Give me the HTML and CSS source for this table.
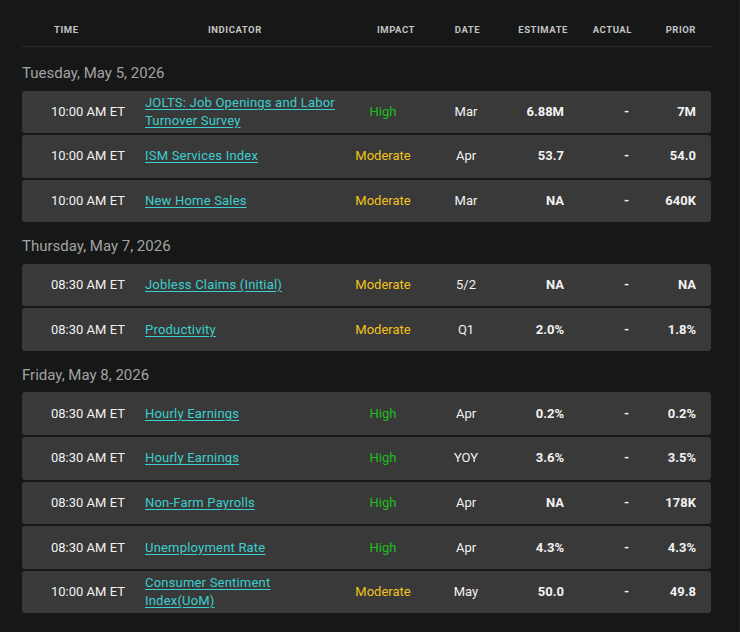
FILE: index.html
```html
<!DOCTYPE html>
<html>
<head>
<meta charset="utf-8">
<link rel="stylesheet" href="styles.css">
</head>
<body>
<div class="page">
  <div class="head grid">
    <div class="h h-time">Time</div>
    <div class="h h-ind">Indicator</div>
    <div class="h h-imp">Impact</div>
    <div class="h h-date">Date</div>
    <div class="h h-est">Estimate</div>
    <div class="h h-act">Actual</div>
    <div class="h h-prior">Prior</div>
  </div>

  <section class="day">
    <h2 class="day-title">Tuesday, May 5, 2026</h2>
    <div class="rows">
      <div class="row grid">
        <div class="c-time">10:00 AM ET</div>
        <div class="c-ind"><a href="#">JOLTS: Job Openings and Labor Turnover Survey</a></div>
        <div class="c-imp high">High</div>
        <div class="c-date">Mar</div>
        <div class="c-est">6.88M</div>
        <div class="c-act">-</div>
        <div class="c-prior">7M</div>
      </div>
      <div class="row grid">
        <div class="c-time">10:00 AM ET</div>
        <div class="c-ind"><a href="#">ISM Services Index</a></div>
        <div class="c-imp mod">Moderate</div>
        <div class="c-date">Apr</div>
        <div class="c-est">53.7</div>
        <div class="c-act">-</div>
        <div class="c-prior">54.0</div>
      </div>
      <div class="row grid">
        <div class="c-time">10:00 AM ET</div>
        <div class="c-ind"><a href="#">New Home Sales</a></div>
        <div class="c-imp mod">Moderate</div>
        <div class="c-date">Mar</div>
        <div class="c-est">NA</div>
        <div class="c-act">-</div>
        <div class="c-prior">640K</div>
      </div>
    </div>
  </section>

  <section class="day">
    <h2 class="day-title">Thursday, May 7, 2026</h2>
    <div class="rows">
      <div class="row grid">
        <div class="c-time">08:30 AM ET</div>
        <div class="c-ind"><a href="#">Jobless Claims (Initial)</a></div>
        <div class="c-imp mod">Moderate</div>
        <div class="c-date">5/2</div>
        <div class="c-est">NA</div>
        <div class="c-act">-</div>
        <div class="c-prior">NA</div>
      </div>
      <div class="row grid">
        <div class="c-time">08:30 AM ET</div>
        <div class="c-ind"><a href="#">Productivity</a></div>
        <div class="c-imp mod">Moderate</div>
        <div class="c-date">Q1</div>
        <div class="c-est">2.0%</div>
        <div class="c-act">-</div>
        <div class="c-prior">1.8%</div>
      </div>
    </div>
  </section>

  <section class="day">
    <h2 class="day-title">Friday, May 8, 2026</h2>
    <div class="rows">
      <div class="row grid">
        <div class="c-time">08:30 AM ET</div>
        <div class="c-ind"><a href="#">Hourly Earnings</a></div>
        <div class="c-imp high">High</div>
        <div class="c-date">Apr</div>
        <div class="c-est">0.2%</div>
        <div class="c-act">-</div>
        <div class="c-prior">0.2%</div>
      </div>
      <div class="row grid">
        <div class="c-time">08:30 AM ET</div>
        <div class="c-ind"><a href="#">Hourly Earnings</a></div>
        <div class="c-imp high">High</div>
        <div class="c-date">YOY</div>
        <div class="c-est">3.6%</div>
        <div class="c-act">-</div>
        <div class="c-prior">3.5%</div>
      </div>
      <div class="row grid">
        <div class="c-time">08:30 AM ET</div>
        <div class="c-ind"><a href="#">Non-Farm Payrolls</a></div>
        <div class="c-imp high">High</div>
        <div class="c-date">Apr</div>
        <div class="c-est">NA</div>
        <div class="c-act">-</div>
        <div class="c-prior">178K</div>
      </div>
      <div class="row grid">
        <div class="c-time">08:30 AM ET</div>
        <div class="c-ind"><a href="#">Unemployment Rate</a></div>
        <div class="c-imp high">High</div>
        <div class="c-date">Apr</div>
        <div class="c-est">4.3%</div>
        <div class="c-act">-</div>
        <div class="c-prior">4.3%</div>
      </div>
      <div class="row grid">
        <div class="c-time">10:00 AM ET</div>
        <div class="c-ind"><a href="#">Consumer Sentiment Index(UoM)</a></div>
        <div class="c-imp mod">Moderate</div>
        <div class="c-date">May</div>
        <div class="c-est">50.0</div>
        <div class="c-act">-</div>
        <div class="c-prior">49.8</div>
      </div>
    </div>
  </section>
</div>
</body>
</html>
```

FILE: styles.css
```css
html, body {
  margin: 0;
  padding: 0;
  background: #161717;
}
body {
  font-family: Roboto, "Liberation Sans", sans-serif;
  color: #f2f2f2;
  height: 632px;
  overflow: hidden;
  border-right: 1px solid #1f2020;
  box-sizing: border-box;
}
.page {
  padding: 0 28px 0 22px;
}
.grid {
  display: grid;
  grid-template-columns: 113px 207px 82px 84px 70px 65px 69px;
  align-items: center;
}
.head {
  height: 46px;
  border-bottom: 1px solid #2a2b2b;
  margin-bottom: 2px;
}
.h {
  font-size: 9.5px;
  font-weight: 700;
  letter-spacing: 0.55px;
  text-transform: uppercase;
  color: #c4c4c4;
  padding-top: 12px;
}
.h-time { padding-left: 32px; }
.h-ind { padding-left: 73px; }
.h-imp { padding-left: 35px; }
.h-date { text-align: center; padding-left: 3px; }
.h-est { text-align: right; padding-right: 10px; }
.h-act { text-align: right; padding-right: 11px; }
.h-prior { text-align: right; padding-right: 16px; }

.day-title {
  margin: 0;
  font-size: 15px;
  font-weight: 400;
  line-height: 18px;
  color: #a3a3a3;
  padding: 15px 0 8.5px;
}
.rows {
  display: flex;
  flex-direction: column;
  gap: 2px;
}
.row {
  height: 42.6px;
  background: #393939;
  border-radius: 3px;
  font-size: 13px;
  line-height: 18px;
}
.c-time { padding-left: 29px; color: #f2f2f2; }
.c-ind { padding-left: 10px; padding-right: 4px; }
.c-ind a {
  color: #3ccfcf;
  letter-spacing: 0.2px;
  text-decoration: underline;
  text-underline-offset: 2px;
}
.c-imp { text-align: center; }
.high { color: #1ebf1e; }
.mod { color: #f2c21b; }
.c-date { text-align: center; font-weight: 400; }
.c-est { text-align: right; padding-right: 14px; font-weight: 700; }
.c-act { text-align: right; padding-right: 14px; font-weight: 700; }
.c-prior { text-align: right; padding-right: 16px; font-weight: 700; }
```
